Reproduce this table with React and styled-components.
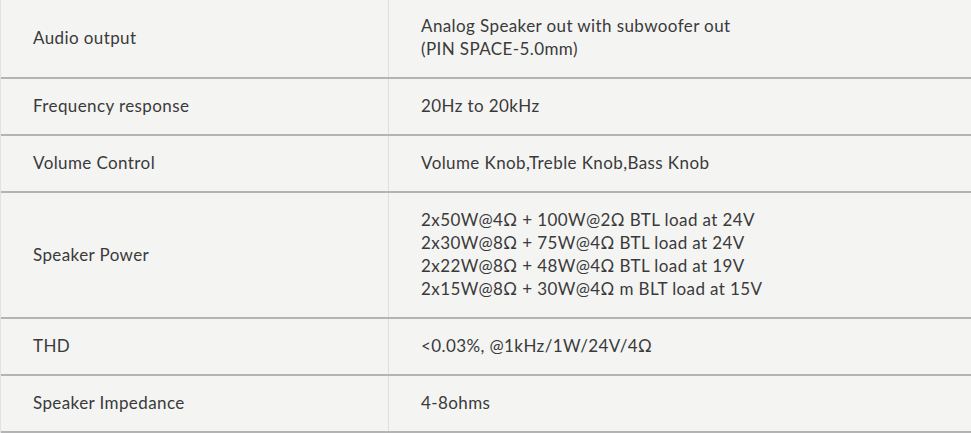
import React from 'react';
import styled, { createGlobalStyle } from 'styled-components';

const GlobalStyle = createGlobalStyle`
  body {
    margin: 0;
    background: #f4f4f3;
    font-family: Lato, "Open Sans", sans-serif;
  }
`;

const Table = styled.div`
  width: 970px;
  margin-top: -1px;
  border-left: 1px solid #e2e2e2;
  border-right: 1px solid #e2e2e2;
  background: #f4f4f3;
`;

const Row = styled.div`
  display: grid;
  grid-template-columns: 387px 1fr;
  border-bottom: 2px solid #b4b4b4;
`;

const Cell = styled.div`
  display: flex;
  flex-direction: column;
  justify-content: center;
  padding: 15px 32px 17px;
  font-size: 17px;
  line-height: 23px;
  letter-spacing: 0.4px;
  color: #3a3a3a;
  border-left: ${(p) => (p.$value ? '1px solid #dedede' : 'none')};
`;

const specs = [
  { label: 'Audio output', value: ['Analog Speaker out with subwoofer out', '(PIN SPACE-5.0mm)'] },
  { label: 'Frequency response', value: ['20Hz to 20kHz'] },
  { label: 'Volume Control', value: ['Volume Knob,Treble Knob,Bass Knob'] },
  {
    label: 'Speaker Power',
    value: [
      '2x50W@4Ω + 100W@2Ω BTL load at 24V',
      '2x30W@8Ω + 75W@4Ω BTL load at 24V',
      '2x22W@8Ω + 48W@4Ω BTL load at 19V',
      '2x15W@8Ω + 30W@4Ω m BLT load at 15V',
    ],
  },
  { label: 'THD', value: ['<0.03%, @1kHz/1W/24V/4Ω'] },
  { label: 'Speaker Impedance', value: ['4-8ohms'] },
];

const App = () => (
  <>
    <GlobalStyle />
    <Table>
      {specs.map((s) => (
        <Row key={s.label}>
          <Cell>{s.label}</Cell>
          <Cell $value>
            {s.value.map((line) => (
              <span key={line}>{line}</span>
            ))}
          </Cell>
        </Row>
      ))}
    </Table>
  </>
);

export default App;
